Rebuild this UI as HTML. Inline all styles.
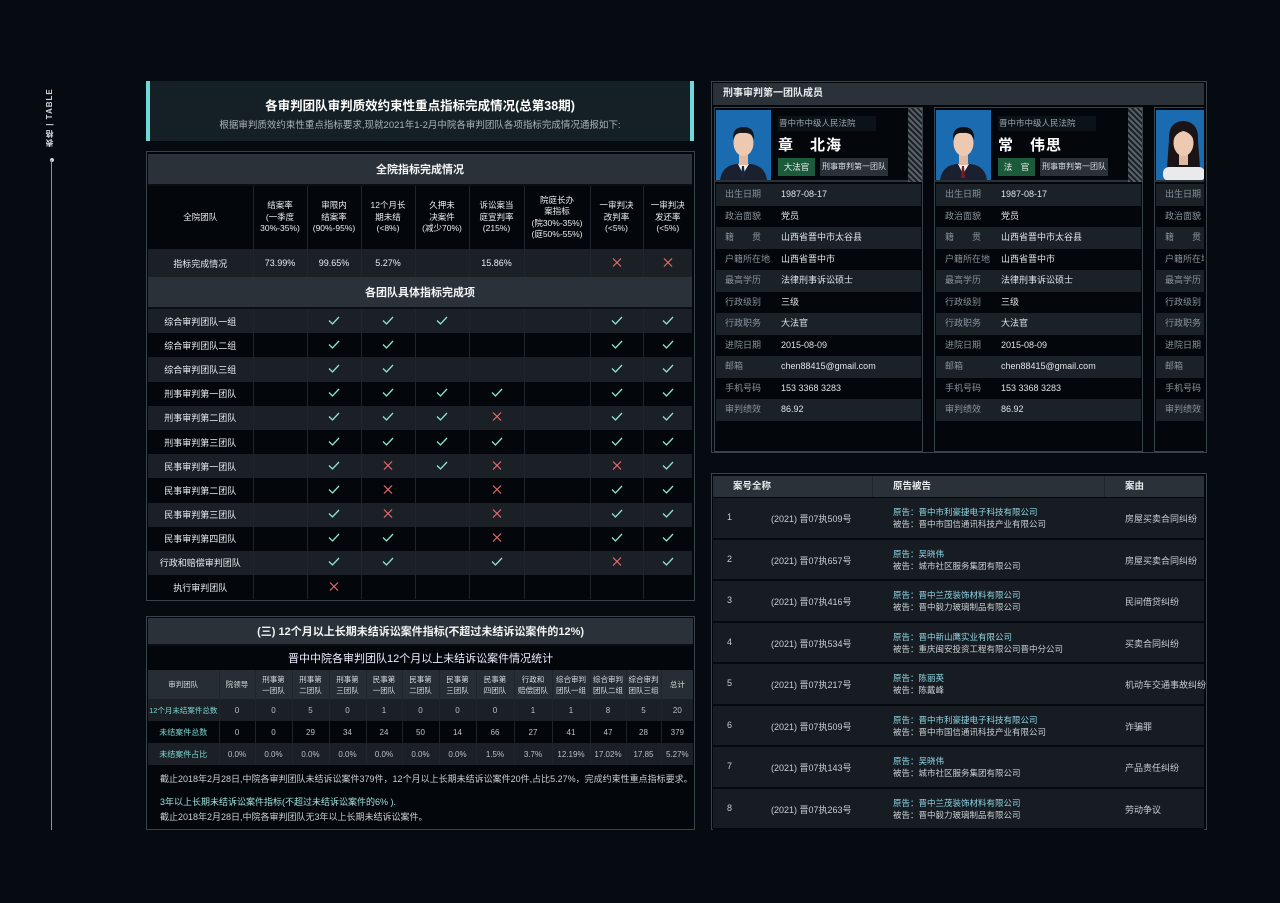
<!DOCTYPE html>
<html><head><meta charset="utf-8">
<style>
*{margin:0;padding:0;box-sizing:border-box}
body{width:1280px;height:903px;background:#060b12;font-family:"Liberation Sans","Noto Sans CJK SC",sans-serif;color:#e6eaec;position:relative;overflow:hidden}
.a{position:absolute}
.vl{left:44px;top:88px;width:16px;height:60px;writing-mode:vertical-rl;transform:rotate(180deg);font-size:8px;color:#cfd6da;letter-spacing:1px;text-align:center;font-weight:bold}
.hdr{left:146px;top:81px;width:548px;height:60px;background:#152026;border-left:4px solid #6fd8d8;border-right:4px solid #6fd8d8;text-align:center}
.panel{border:1px solid #3a434a;background:#03070b}
table{border-collapse:collapse;table-layout:fixed}
td{text-align:center;vertical-align:middle;border-left:1px solid #1e252c;overflow:hidden;white-space:nowrap}
td:first-child{border-left:none}
.t1 td{font-size:9px;color:#e8ecee}
.t1 .hd td{font-size:8.5px;line-height:11.5px;white-space:normal}
.t2 td{font-size:8px;color:#b8c0c4}
.t2 .hd td{background:#262d34;font-size:7.5px;line-height:11px;white-space:normal;color:#d8dde0}
.t2 td.c{color:#7fd6d0}
.sec td{background:#2a3138;font-size:11px !important;font-weight:bold;color:#f2f4f5 !important;border-bottom:2px solid #0a0f14}
.lt td{background:#1a2026}
.dk td{background:#03070b}
.ck{display:inline-block;width:12px;height:9px}
.card{position:absolute;top:107px;width:209px;height:345px;border:1px solid #3a434a;background:#03070b}
.ctop{position:absolute;left:0;top:0;width:207px;height:74px;background:#03070b;border-bottom:2px solid #2a3138}
.photo{position:absolute;left:1px;top:2px;width:55px;height:70px;background:#1a6bb0;overflow:hidden}
.court{position:absolute;left:63px;top:8px;width:98px;height:15px;background:#0c1318;font-size:8.5px;color:#9aa3a8;line-height:15px;padding-left:1px}
.name{position:absolute;left:63px;top:26px;font-size:15px;font-weight:bold;color:#fff;letter-spacing:1px}
.b1{position:absolute;left:63px;top:50px;width:37px;height:18px;background:#1c5a3c;font-size:8.5px;color:#e8f0ec;text-align:center;line-height:18px}
.b2{position:absolute;left:105px;top:50px;width:68px;height:18px;background:#2a3138;font-size:8px;color:#d8dde0;text-align:center;line-height:18px}
.stripe{position:absolute;right:0;top:0;width:14px;height:74px;background:repeating-linear-gradient(45deg,#5a6268 0 2px,#1c2227 2px 4px)}
.rows{position:absolute;left:1px;top:76px;width:205px}
.r{height:21.5px;line-height:21.5px;font-size:9px;position:relative}
.r:nth-child(odd){background:#1a2127}
.r span{position:absolute;left:9px;color:#8a949c}
.r b{position:absolute;left:65px;font-weight:normal;color:#dfe3e5}
.cr{position:absolute;left:713px;width:491px;height:41.5px;background:#161c22;border-bottom:2px solid #05090e;font-size:9px;color:#c8cfd3;white-space:nowrap}
.cr .n{position:absolute;left:14px;top:14px}
.cr .no{position:absolute;left:58px;top:14px}
.cr .p{position:absolute;left:180px;top:8px;line-height:12px;font-size:8.5px}
.cr .p i{font-style:normal;color:#8fd6e6;display:block}
.cr .y{position:absolute;left:412px;top:14px}
</style></head><body>
<svg width="0" height="0" style="position:absolute"><defs>
<symbol id="v" viewBox="0 0 12 9"><polyline points="1,4.5 4.5,8 11,1" fill="none" stroke="#8fe6c8" stroke-width="1.3"/></symbol>
<symbol id="x" viewBox="0 0 12 9"><path d="M2,0.5 L10,8.5 M10,0.5 L2,8.5" fill="none" stroke="#e86a6a" stroke-width="1.2"/></symbol>
</defs></svg>

<div class="a vl">表格 | TABLE</div>
<div class="a" style="left:50px;top:158px;width:4px;height:4px;border-radius:2px;background:#cfd6da"></div>
<div class="a" style="left:51px;top:160px;width:1px;height:670px;background:#8a949c"></div>

<div class="a hdr">
<div style="margin-top:14px;font-size:12.5px;font-weight:bold;color:#fff">各审判团队审判质效约束性重点指标完成情况(总第38期)</div>
<div style="margin-top:3px;font-size:9.5px;color:#aab3b8">根据审判质效约束性重点指标要求,现就2021年1-2月中院各审判团队各项指标完成情况通报如下:</div>
</div>

<div class="a panel" style="left:146px;top:151px;width:549px;height:450px;padding:2px 1px">
<table class="t1" style="width:544px">
<colgroup><col style="width:105px"><col style="width:54px"><col style="width:54px"><col style="width:54px"><col style="width:54px"><col style="width:55px"><col style="width:66px"><col style="width:53px"><col style="width:49px"></colgroup>
<tr class="sec" style="height:31px"><td colspan="9">全院指标完成情况</td></tr>
<tr class="dk hd" style="height:64px"><td>全院团队</td><td>结案率<br>(一季度<br>30%-35%)</td><td>审限内<br>结案率<br>(90%-95%)</td><td>12个月长<br>期未结<br>(&lt;8%)</td><td>久押未<br>决案件<br>(减少70%)</td><td>诉讼案当<br>庭宣判率<br>(215%)</td><td>院庭长办<br>案指标<br>(院30%-35%)<br>(庭50%-55%)</td><td>一审判决<br>改判率<br>(&lt;5%)</td><td>一审判决<br>发还率<br>(&lt;5%)</td></tr>
<tr class="lt" style="height:28px"><td>指标完成情况</td><td>73.99%</td><td>99.65%</td><td>5.27%</td><td></td><td>15.86%</td><td></td><td><svg class="ck"><use href="#x"/></svg></td><td><svg class="ck"><use href="#x"/></svg></td></tr>
<tr class="sec" style="height:31px"><td colspan="9">各团队具体指标完成项</td></tr>
</table>
<table class="t1" style="width:544px">
<colgroup><col style="width:105px"><col style="width:54px"><col style="width:54px"><col style="width:54px"><col style="width:54px"><col style="width:55px"><col style="width:66px"><col style="width:53px"><col style="width:49px"></colgroup>
<tbody id="tb"></tbody>
</table>
</div>

<div class="a panel" style="left:146px;top:616px;width:549px;height:214px;padding:1px 1px">
<table class="t2" style="width:545px">
<colgroup><col style="width:71px"><col style="width:36px"><col style="width:37px"><col style="width:37px"><col style="width:37px"><col style="width:36px"><col style="width:37px"><col style="width:37px"><col style="width:38px"><col style="width:38px"><col style="width:38px"><col style="width:36px"><col style="width:35px"><col style="width:32px"></colgroup>
<tr class="sec" style="height:27px"><td colspan="14">(三) 12个月以上长期未结诉讼案件指标(不超过未结诉讼案件的12%)</td></tr>
<tr class="dk" style="height:25px"><td colspan="14" style="font-size:11px;color:#eef">晋中中院各审判团队12个月以上未结诉讼案件情况统计</td></tr>
<tr class="hd" style="height:29px"><td>审判团队</td><td>院领导</td><td>刑事第<br>一团队</td><td>刑事第<br>二团队</td><td>刑事第<br>三团队</td><td>民事第<br>一团队</td><td>民事第<br>二团队</td><td>民事第<br>三团队</td><td>民事第<br>四团队</td><td>行政和<br>赔偿团队</td><td>综合审判<br>团队一组</td><td>综合审判<br>团队二组</td><td>综合审判<br>团队三组</td><td>总计</td></tr>
<tr class="lt" style="height:22px"><td class="c" style="font-size:7.5px">12个月未结案件总数</td><td>0</td><td>0</td><td>5</td><td>0</td><td>1</td><td>0</td><td>0</td><td>0</td><td>1</td><td>1</td><td>8</td><td>5</td><td>20</td></tr>
<tr class="dk" style="height:22px"><td class="c">未结案件总数</td><td>0</td><td>0</td><td>29</td><td>34</td><td>24</td><td>50</td><td>14</td><td>66</td><td>27</td><td>41</td><td>47</td><td>28</td><td>379</td></tr>
<tr class="lt" style="height:22px"><td class="c">未结案件占比</td><td>0.0%</td><td>0.0%</td><td>0.0%</td><td>0.0%</td><td>0.0%</td><td>0.0%</td><td>0.0%</td><td>1.5%</td><td>3.7%</td><td>12.19%</td><td>17.02%</td><td>17.85</td><td>5.27%</td></tr>
</table>
<div style="position:absolute;left:13px;top:155px;font-size:9px;color:#c8cfd3">截止2018年2月28日,中院各审判团队未结诉讼案件379件，12个月以上长期未结诉讼案件20件,占比5.27%，完成约束性重点指标要求。</div>
<div style="position:absolute;left:13px;top:178px;font-size:9px;color:#9fe0dc">3年以上长期未结诉讼案件指标(不超过未结诉讼案件的6% ).</div>
<div style="position:absolute;left:13px;top:193px;font-size:9px;color:#c8cfd3">截止2018年2月28日,中院各审判团队无3年以上长期未结诉讼案件。</div>
</div>

<div class="a panel" style="left:711px;top:81px;width:496px;height:372px"></div>
<div class="a" style="left:713px;top:83px;width:491px;height:22px;background:#2a3138;font-size:10px;font-weight:bold;line-height:22px;padding-left:10px">刑事审判第一团队成员</div>
<div class="a" style="left:0;top:0;width:1204px;height:903px;overflow:hidden" id="cards"></div>

<div class="a panel" style="left:711px;top:473px;width:496px;height:357px"></div>
<div class="a" style="left:713px;top:476px;width:491px;height:21px;background:#2a3138;font-size:9.5px;font-weight:bold;line-height:21px">
<span class="a" style="left:20px">案号全称</span><span class="a" style="left:180px">原告被告</span><span class="a" style="left:412px">案由</span>
<span class="a" style="left:159px;top:0;width:1px;height:21px;background:#1e252c"></span><span class="a" style="left:391px;top:0;width:1px;height:21px;background:#1e252c"></span></div>
<div id="cases"></div>

<script>
var V='<svg class="ck"><use href="#v"/></svg>',X='<svg class="ck"><use href="#x"/></svg>';
var rows=[["综合审判团队一组","vvv--vv"],["综合审判团队二组","vv---vv"],["综合审判团队三组","vv---vv"],["刑事审判第一团队","vvvv-vv"],["刑事审判第二团队","vvvx-vv"],["刑事审判第三团队","vvvv-vv"],["民事审判第一团队","vxvx-xv"],["民事审判第二团队","vx-x-vv"],["民事审判第三团队","vx-x-vv"],["民事审判第四团队","vv-x-vv"],["行政和赔偿审判团队","vv-v-xv"],["执行审判团队","x------"]];
var h='';rows.forEach(function(r,i){h+='<tr class="'+(i%2?'dk':'lt')+'" style="height:24.2px"><td>'+r[0]+'</td><td></td>';for(var k=0;k<7;k++){var c=r[1][k];h+='<td>'+(c=='v'?V:c=='x'?X:'')+'</td>';}h+='</tr>';});
document.getElementById('tb').innerHTML=h;

function person(hair,tie,female){
 return '<svg width="55" height="70" viewBox="0 0 55 70"><rect width="55" height="70" fill="#1a6bb0"/>'+
 (female?'<path d="M13 30 Q12 12 27 11 Q43 12 42 30 L44 58 L11 58 Z" fill="#1a1416"/><rect x="7" y="57" width="42" height="14" rx="6" fill="#e8eaec"/>':
 '<path d="M4 70 Q6 56 20 54 L35 54 Q49 56 51 70 Z" fill="#1b2030"/><path d="M22 54 L27 64 L33 54 Z" fill="#f2f2f2"/><path d="M26 56 L28 56 L29 68 L25 68 Z" fill="'+tie+'"/>')+
 '<rect x="23" y="42" width="9" height="13" fill="#e0b9a0"/><ellipse cx="27.5" cy="33" rx="10" ry="13" fill="#ecc9b0"/>'+
 (female?'<path d="M17 30 Q18 17 27.5 17 Q37 17 38 30 Q34 22 27 21 Q20 23 17 30Z" fill="#1a1416"/>':'<path d="M17 30 Q16 17 27.5 17 Q39 17 38 30 Q36 22 27 23 Q19 22 17 30Z" fill="'+hair+'"/>')+'</svg>';
}
var info=[["出生日期","1987-08-17"],["政治面貌","党员"],["籍　　贯","山西省晋中市太谷县"],["户籍所在地","山西省晋中市"],["最高学历","法律刑事诉讼硕士"],["行政级别","三级"],["行政职务","大法官"],["进院日期","2015-08-09"],["邮箱","chen88415@gmail.com"],["手机号码","153 3368 3283"],["审判绩效","86.92"]];
function card(x,name,b1,ph){var s='<div class="card" style="left:'+x+'px"><div class="ctop"><div class="photo">'+ph+'</div><div class="court">晋中市中级人民法院</div><div class="name">'+name+'</div><div class="b1">'+b1+'</div><div class="b2">刑事审判第一团队</div><div class="stripe"></div></div><div class="rows">';
info.forEach(function(r){s+='<div class="r"><span>'+r[0]+'</span><b>'+r[1]+'</b></div>';});return s+'</div></div>';}
document.getElementById('cards').innerHTML=card(714,'章　北海','大法官',person('#15161a','#1b2540',false))+card(934,'常　伟思','法　官',person('#0e0f12','#7a1a22',false))+card(1154,'','法　官',person('#1a1416','',true));
var cs=[["(2021) 晋07执509号","晋中市利豪捷电子科技有限公司","晋中市国信通讯科技产业有限公司","房屋买卖合同纠纷"],["(2021) 晋07执657号","吴晓伟","城市社区服务集团有限公司","房屋买卖合同纠纷"],["(2021) 晋07执416号","晋中兰茂装饰材料有限公司","晋中毅力玻璃制品有限公司","民间借贷纠纷"],["(2021) 晋07执534号","晋中新山鹰实业有限公司","重庆闽安投资工程有限公司晋中分公司","买卖合同纠纷"],["(2021) 晋07执217号","陈丽英","陈戴峰","机动车交通事故纠纷"],["(2021) 晋07执509号","晋中市利豪捷电子科技有限公司","晋中市国信通讯科技产业有限公司","诈骗罪"],["(2021) 晋07执143号","吴晓伟","城市社区服务集团有限公司","产品责任纠纷"],["(2021) 晋07执263号","晋中兰茂装饰材料有限公司","晋中毅力玻璃制品有限公司","劳动争议"]];
var c='';cs.forEach(function(r,i){c+='<div class="cr" style="top:'+(498+i*41.5)+'px"><span class="n">'+(i+1)+'</span><span class="no">'+r[0]+'</span><div class="p"><i>原告：'+r[1]+'</i>被告：'+r[2]+'</div><span class="y">'+r[3]+'</span></div>';});
document.getElementById('cases').innerHTML=c;
</script>
</body></html>
